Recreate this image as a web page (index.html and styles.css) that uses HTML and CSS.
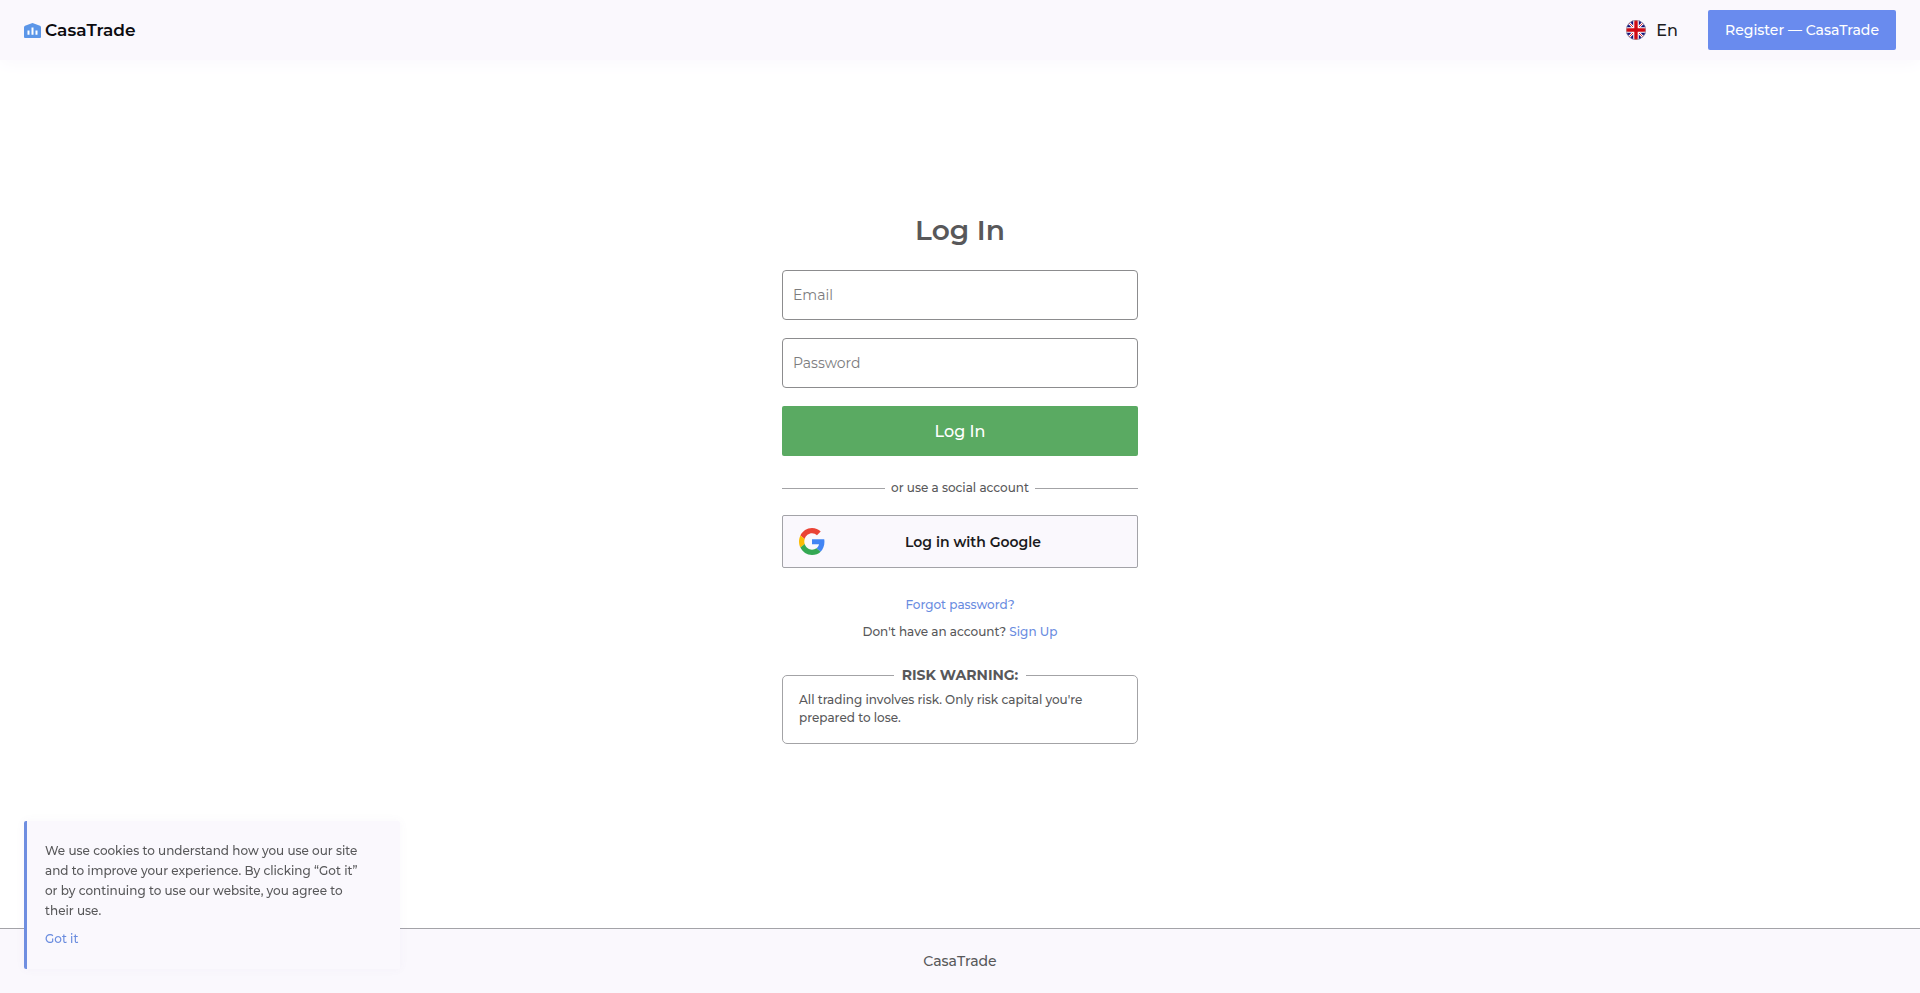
FILE: index.html
```html
<!DOCTYPE html>
<html lang="en">
<head>
    <meta charset="UTF-8">
    <meta name="viewport" content="width=device-width, initial-scale=1.0">
    <title>Log In - CasaTrade</title>
    <link rel="stylesheet" href="styles.css">
</head>
<body>
    <header class="header">
        <a href="#" class="logo">
            <svg class="logo-icon" width="17" height="15" viewBox="0 0 17 15" aria-hidden="true">
                <path fill="#5b96e8" d="M8.500 0 16 2.800q1 .5 1 1.500V14q0 1-1 1H1q-1 0-1-1V4.300q0-1 1-1.500z"/>
                <path fill="#fff" d="M3.500 7.500h2v4.300h-2zM7.500 4.500h2v7.300h-2zM11.500 7.500h2v4.300h-2z"/>
            </svg>
            <span class="logo-text">CasaTrade</span>
        </a>
        <div class="header-right">
            <button type="button" class="lang">
                <svg width="20" height="20" viewBox="0 0 20 20" aria-hidden="true">
                    <clipPath id="round"><circle cx="10" cy="10" r="10"/></clipPath>
                    <g clip-path="url(#round)">
                        <path fill="#10107a" d="M0 0h20v20H0z"/>
                        <path stroke="#fff" stroke-width="2.600" d="M0 0l20 20M20 0 0 20"/>
                        <path stroke="#d01020" stroke-width=".9" d="M0 0l20 20M20 0 0 20"/>
                        <path stroke="#fff" stroke-width="5.600" d="M10 0v20M0 10h20"/>
                        <path stroke="#d00a14" stroke-width="3.400" d="M10 0v20M0 10h20"/>
                    </g>
                    <circle cx="10" cy="10" r="9.500" fill="none" stroke="#aaa" stroke-opacity=".6"/>
                </svg>
                <span>En</span>
            </button>
            <a href="#" class="register">Register — CasaTrade</a>
        </div>
    </header>

    <main class="main">
        <form class="login">
            <h1>Log In</h1>
            <input type="email" class="field" placeholder="Email" aria-label="Email">
            <input type="password" class="field" placeholder="Password" aria-label="Password">
            <button type="submit" class="submit">Log In</button>

            <div class="divider">or use a social account</div>

            <button type="button" class="google">
                <svg width="26" height="27" viewBox="0 0 48 48" preserveAspectRatio="none" aria-hidden="true">
                    <path fill="#EA4335" d="M24 9.500c3.540 0 6.710 1.220 9.210 3.600l6.850-6.850C35.900 2.380 30.470 0 24 0 14.620 0 6.510 5.380 2.560 13.220l7.980 6.190C12.430 13.720 17.740 9.500 24 9.500z"/>
                    <path fill="#4285F4" d="M46.980 24.550c0-1.570-.15-3.090-.38-4.550H24v9.020h12.940c-.58 2.960-2.260 5.480-4.780 7.180l7.730 6c4.510-4.180 7.090-10.360 7.090-17.650z"/>
                    <path fill="#FBBC05" d="M10.530 28.590c-.48-1.450-.76-2.990-.76-4.590s.27-3.140.76-4.590l-7.980-6.190C.92 16.460 0 20.120 0 24c0 3.880.92 7.540 2.560 10.780l7.970-6.190z"/>
                    <path fill="#34A853" d="M24 48c6.480 0 11.930-2.130 15.890-5.810l-7.730-6c-2.150 1.450-4.920 2.300-8.160 2.300-6.260 0-11.570-4.220-13.470-9.910l-7.980 6.190C6.510 42.620 14.620 48 24 48z"/>
                </svg>
                <span>Log in with Google</span>
            </button>

            <div class="links">
                <a href="#">Forgot password?</a>
                <p>Don't have an account? <a href="#">Sign Up</a></p>
            </div>

            <fieldset class="risk">
                <legend>RISK WARNING:</legend>
                <p>All trading involves risk. Only risk capital you're prepared to lose.</p>
            </fieldset>
        </form>
    </main>

    <footer class="footer">CasaTrade</footer>

    <div class="cookies">
        <p>We use cookies to understand how you use our site and to improve your experience. By clicking “Got it” or by continuing to use our website, you agree to their use.</p>
        <button type="button">Got it</button>
    </div>
</body>
</html>
```
FILE: styles.css
```css
* {
    box-sizing: border-box;
}
body {
    margin: 0;
    min-height: 100vh;
    display: flex;
    flex-direction: column;
    font-family: Montserrat, Inter, sans-serif;
    font-size: 12px;
    line-height: 20px;
    color: #58585a;
    background-color: #fff;
}
h1, p {
    margin: 0;
}
a {
    color: #6a8cdf;
    text-decoration: none;
}
button, input {
    font-family: inherit;
}
button {
    cursor: pointer;
}

.header {
    display: flex;
    justify-content: space-between;
    align-items: center;
    padding: 10px 24px;
    background-color: #faf8fd;
    box-shadow: 0 4px 16px #faf8fd;
}
.logo {
    display: flex;
    align-items: center;
    gap: 4px;
    color: #0c0c10;
}
.logo-text {
    font-size: 17px;
    font-weight: 600;
}
.header-right {
    display: flex;
    align-items: center;
    gap: 30px;
}
.lang {
    display: flex;
    align-items: center;
    gap: 10px;
    padding: 0;
    border: none;
    background: none;
    font-size: 16px;
    font-weight: 500;
    color: #1c1c22;
}
.register {
    padding: 10px 17px;
    border-radius: 2px;
    background-color: #698bee;
    color: #fff;
    font-size: 14px;
    font-weight: 500;
}

.main {
    flex: 1;
    display: flex;
    justify-content: center;
    align-items: center;
}
.login {
    display: flex;
    flex-direction: column;
    width: 356px;
    margin-bottom: 34px;
}
.login h1 {
    margin-bottom: 20px;
    font-size: 28px;
    font-weight: 600;
    line-height: 40px;
    text-align: center;
}
.field {
    height: 50px;
    margin-bottom: 18px;
    padding: 0 10px;
    border: 1px solid #8c8c8e;
    border-radius: 4px;
    font-size: 14px;
}
.field::placeholder {
    color: #7c7c7e;
}
.submit {
    height: 50px;
    border: none;
    border-radius: 2px;
    background-color: #5aaa62;
    color: #fff;
    font-size: 16px;
    font-weight: 500;
}
.divider {
    display: flex;
    align-items: center;
    gap: 6px;
    margin: 22px 0 17px;
    font-weight: 500;
}
.divider::before, .divider::after {
    content: "";
    flex: 1;
    height: 1px;
    background-color: #a3a3a6;
}
.google {
    display: flex;
    align-items: center;
    height: 53px;
    padding: 0 16px;
    border: 1px solid #a3a3a8;
    border-radius: 2px;
    background-color: #faf8fd;
    color: #1a1a20;
    font-size: 14px;
    font-weight: 600;
}
.google span {
    flex: 1;
}
.links {
    display: flex;
    flex-direction: column;
    align-items: center;
    gap: 7px;
    margin: 27px 0 23px;
    font-weight: 500;
}
.risk {
    margin: 0;
    padding: 6px 16px 16px;
    border: 1px solid #a3a3a6;
    border-radius: 5px;
    line-height: 18px;
    font-weight: 500;
}
.risk legend {
    margin: 0 auto;
    padding: 0 8px;
    font-size: 14px;
    font-weight: 700;
    line-height: 20px;
}

.footer {
    padding: 22px;
    border-top: 1px solid #a3a3a8;
    background-color: #faf8fd;
    font-size: 14px;
    font-weight: 500;
    text-align: center;
}

.cookies {
    position: fixed;
    left: 24px;
    bottom: 24px;
    width: 376px;
    padding: 20px 36px 20px 18px;
    border-left: 3px solid #6f8ee0;
    border-radius: 2px;
    background-color: #faf8fd;
    box-shadow: 0 0 10px rgba(120, 100, 160, 0.05);
    font-weight: 500;
}
.cookies button {
    margin-top: 8px;
    padding: 0;
    border: none;
    background: none;
    color: #6a8cdf;
    font-size: 12px;
    font-weight: 500;
    line-height: 20px;
}
```
